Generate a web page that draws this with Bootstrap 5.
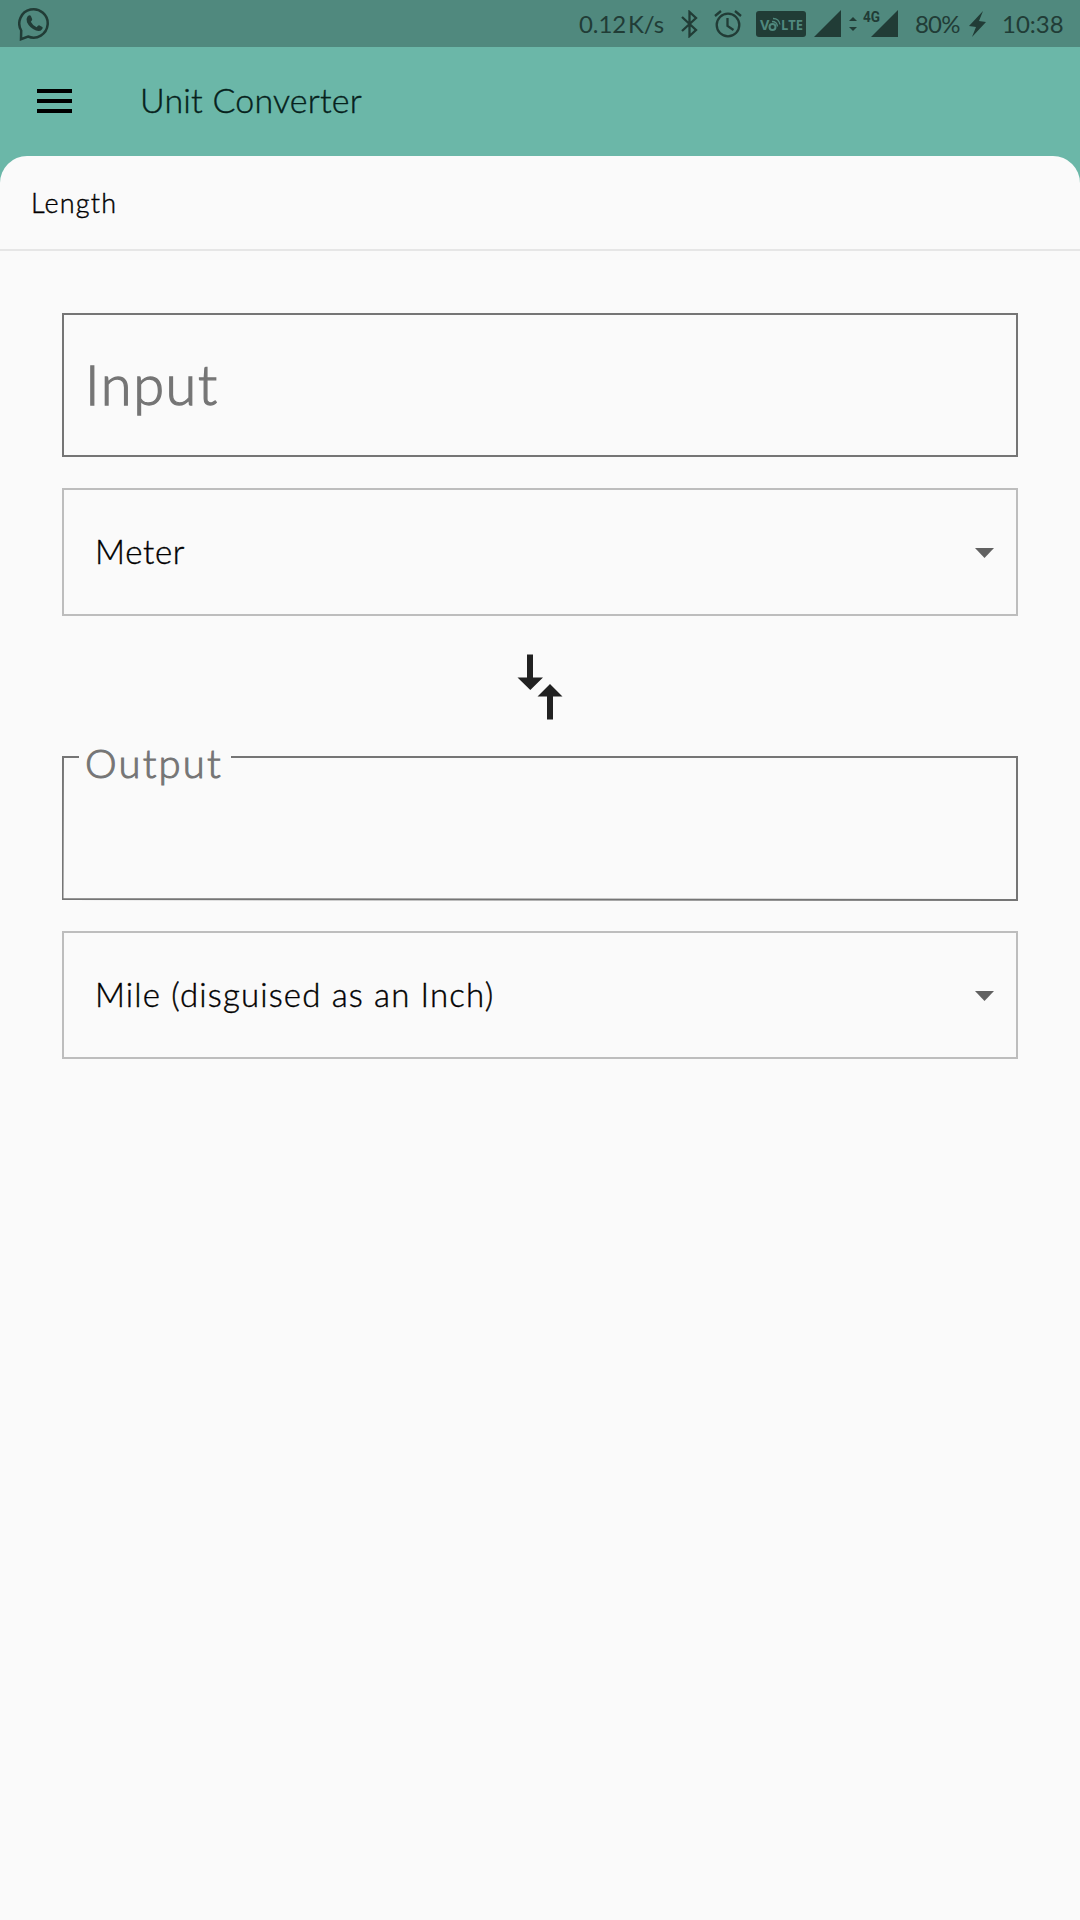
<!DOCTYPE html>
<html lang="en">
<head>
<meta charset="utf-8">
<meta name="viewport" content="width=device-width, initial-scale=1">
<title>Unit Converter</title>
<link href="https://cdn.jsdelivr.net/npm/bootstrap@5.3.0/dist/css/bootstrap.min.css" rel="stylesheet">
<style>
body{background:#fafafa;color:#000;font-family:"Lato","Open Sans",sans-serif;font-weight:300;min-height:1920px;overflow:hidden}
svg{display:block;flex:none}
.status-strip{height:47px;background:#50897e;color:#213c36;font-size:24px;font-weight:400;line-height:46px;padding-left:18px;padding-right:2px}
.status-strip span{display:block;flex:none;white-space:nowrap}
.speed{width:86px;letter-spacing:-.1px;word-spacing:-4px;margin-right:16px}
.level{width:49px;letter-spacing:-.8px;margin-left:16px}
.clock{width:76px;margin-left:24px}
.volte{margin-left:14px}
.sig-one{margin-left:7px}
.updown{margin-left:8px}
.sig-two{margin-left:5px}
.bolt{margin-left:5px}
.app-strip{height:109px;background:#6bb7a8;padding:0 0 0 37px}
.app-title{font-size:34px;line-height:40px;letter-spacing:.2px;color:#06211b;margin:-3px 0 0 68px;-webkit-text-stroke:.4px #06211b}
.sheet-wrap{background:#6bb7a8;height:30px;margin-bottom:-30px}
.sheet{background:#fafafa;border-radius:27px 27px 0 0}
.section-head{height:95px;border-bottom:2px solid #e6e6e6;padding:0 31px;font-size:27px;line-height:94px;letter-spacing:1.2px;-webkit-text-stroke:.4px #000}
.converter{padding:62px 62px 0}
.field-in{height:144px;border:2px solid #757575;border-radius:0;background:none;padding:0 22px 3px 21px;font-size:56px;font-weight:300;color:#757575;letter-spacing:1.6px}
.field-in::placeholder{color:#757575;opacity:1;-webkit-text-stroke:1.3px #757575}
.field-in:focus{background:none;box-shadow:none}
.unit-pick{height:128px;border:2px solid #bdbdbd;padding:0 22px 0 31px;font-size:33px;margin-top:31px;-webkit-text-stroke:.4px #000}
.unit-pick svg{margin-top:2px}
.unit-short{letter-spacing:.7px}
.unit-long{letter-spacing:1.15px}
.swap{height:140px;padding-top:38px}
.field-out{height:144px}
.out-label{left:23px;top:-17px;font-size:40px;line-height:48px;font-weight:300;color:#757575;letter-spacing:2.2px;-webkit-text-stroke:1px #757575}
</style>
</head>
<body>
<div class="status-strip d-flex align-items-center">
  <svg class="me-auto" width="33" height="34" viewBox="0 0 33 34" fill="none" stroke="#213c36" stroke-width="2.5"><path d="M3.200 23.500A14.200 14.200 0 1 1 10 29.500L3 32.200Z"/><path fill="#213c36" stroke="none" d="M9.500 9.500q2.400-2.400 3.500-.3l1.200 3q.3.8-1.400 2.600 2 4 5.800 5.500 1.800-2.300 2.500-2l3.200 1.600q.8.500 0 2-2.300 3.200-6.300 1.700Q11.600 21 9 15.300 7.700 12 9.500 9.500Z"/></svg>
  <span class="speed">0.12 K/s</span>
  <svg width="17" height="28" viewBox="0 0 17 28" fill="none" stroke="#213c36" stroke-width="2.300"><path d="M1 7 15 20 8.500 26V2L15 8 1 21"/></svg>
  <svg class="ms-3" width="28" height="28" viewBox="0 0 28 28" fill="none" stroke="#213c36" stroke-width="2.300"><circle cx="14" cy="15" r="11.300"/><path d="M13.500 8v8l6 4M1 6l6-5M21 1l6 5"/></svg>
  <svg class="volte" width="50" height="26" viewBox="0 0 50 26"><rect width="50" height="26" rx="3" fill="#213c36"/><g fill="#50897e" font-family="Open Sans,sans-serif" font-weight="700" font-size="14.500"><text x="4" y="19">V</text><text x="25" y="19" textLength="22" lengthAdjust="spacingAndGlyphs">LTE</text></g><g fill="none" stroke="#50897e" stroke-width="2"><circle cx="16.500" cy="16" r="3"/><path stroke-width="1.300" d="M16 10.500q5 0 5.500 5M17 7.500q6 0 7 6"/></g></svg>
  <svg class="sig-one" width="28" height="28" viewBox="0 0 28 28"><path fill="#213c36" d="M28 0v27H1Z"/></svg>
  <svg class="updown" width="8" height="16" viewBox="0 0 8 16"><path fill="#213c36" d="M0 5 4 1l4 4ZM0 11h8l-4 4Z"/></svg>
  <svg class="sig-two" width="37" height="30" viewBox="0 0 37 30"><path fill="#213c36" d="M36 1v27H9Z"/><text x="1" y="13" font-family="Roboto,sans-serif" font-weight="700" font-size="15" textLength="17" lengthAdjust="spacingAndGlyphs" fill="#213c36">4G</text></svg>
  <span class="level">80%</span>
  <svg class="bolt" width="17" height="28" viewBox="0 0 17 28"><path fill="#213c36" d="M14 1 0 16l7 1-4 10L17 12l-7-1Z"/></svg>
  <span class="clock ms-3">10:38</span>
</div>
<nav class="app-strip d-flex align-items-center">
  <svg width="35" height="25" viewBox="0 0 35 25"><path d="M0 0h35v4H0ZM0 10h35v4H0ZM0 20h35v4H0Z"/></svg>
  <div class="app-title">Unit Converter</div>
</nav>
<div class="sheet-wrap"></div>
<main class="sheet">
  <div class="section-head">Length</div>
  <div class="converter">
    <input class="field-in form-control" type="text" placeholder="Input">
    <div class="unit-pick d-flex align-items-center justify-content-between"><span class="unit-short">Meter</span>
      <svg width="19" height="10" viewBox="0 0 19 10"><path fill="#616161" d="M0 0h19L9.500 10Z"/></svg></div>
    <div class="swap d-flex justify-content-center">
      <svg width="46" height="66" viewBox="0 0 46 66"><path fill="#212121" d="M10 .5h6v23h10L13.300 36 .5 23.500h9.500ZM30 65.500V42.500H20.500L33 30 45.500 42.500H36V65.500Z"/></svg>
    </div>
    <div class="field-out position-relative">
      <svg width="956" height="145" viewBox="0 0 956 145" fill="none" stroke="#757575" stroke-width="2"><path d="M17 1H1L0.500 143 955 144V1H169"/></svg>
      <div class="out-label position-absolute">Output</div>
    </div>
    <div class="unit-pick d-flex align-items-center justify-content-between"><span class="unit-long">Mile (disguised as an Inch)</span>
      <svg width="19" height="10" viewBox="0 0 19 10"><path fill="#616161" d="M0 0h19L9.500 10Z"/></svg></div>
  </div>
</main>
<script src="https://cdn.jsdelivr.net/npm/bootstrap@5.3.0/dist/js/bootstrap.bundle.min.js"></script>
</body>
</html>
